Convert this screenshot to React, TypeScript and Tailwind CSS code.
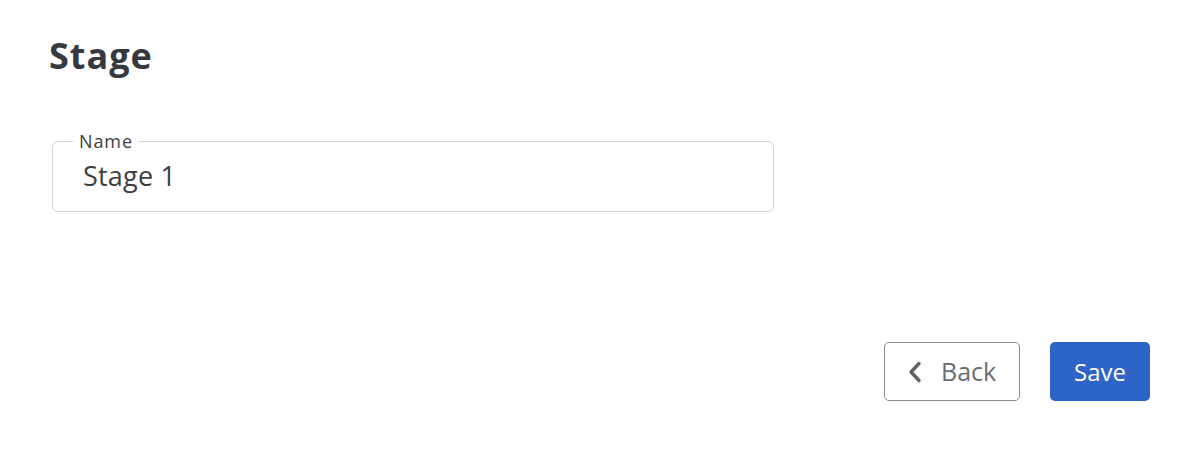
import React from 'react';

export default function App() {
  return (
    <div className="w-[1194px] h-[466px] bg-white font-['Open_Sans',sans-serif] text-[#363a40]">
      <div className="pl-[49px] pt-[32px]">
        <h1 className="text-[36px] leading-[48px] font-bold tracking-[1px]">Stage</h1>
      </div>

      <div className="pl-[52px] pt-[61px] w-[774px]">
        <div className="relative border border-[#d2d2d2] rounded-[6px] h-[71px] flex items-center pl-[30px] pb-[1px]">
          <span className="absolute left-[20px] top-[-13px] bg-white px-[6px] text-[18px] leading-[24px] text-[#3c3f42] tracking-[0.9px]">
            Name
          </span>
          <span className="text-[27px] leading-[34px] text-[#3c3f42] tracking-[0.2px]">Stage 1</span>
        </div>
      </div>

      <div className="flex justify-end gap-[30px] pr-[44px] pt-[130px]">
        <button className="w-[136px] h-[59px] border border-[#8a8d90] rounded-[5px] flex items-center pl-[22px] text-[#6a6e73] text-[25px]">
          <svg width="16" height="22" viewBox="0 0 16 22" fill="none" className="mr-[18px]">
            <path d="M12 2.5 L4 11 L12 19.5" stroke="#5f6368" strokeWidth="3.4" strokeLinecap="round" strokeLinejoin="round" />
          </svg>
          Back
        </button>
        <button className="w-[100px] h-[59px] bg-[#2e63c8] rounded-[5px] text-white text-[24px] flex items-center justify-center">
          Save
        </button>
      </div>
    </div>
  );
}
